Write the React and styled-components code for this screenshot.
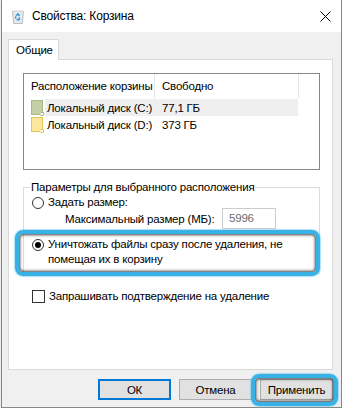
import styled, { createGlobalStyle } from 'styled-components'

const GlobalStyle = createGlobalStyle`
  html, body {
    margin: 0;
    padding: 0;
    background: #fff;
  }
  body {
    font-family: "Liberation Sans", Arial, sans-serif;
    font-size: 11.5px;
    letter-spacing: -0.2px;
    color: #000;
  }
`

const Window = styled.div`
  box-sizing: border-box;
  width: 341px;
  height: 408px;
  margin-left: 1px;
  background: #f0f0f0;
  border: 1px solid #868686;
  border-top: none;
  box-shadow: 0 1px 2px rgba(0, 0, 0, 0.25);
  display: flex;
  flex-direction: column;
  white-space: nowrap;
`

const TitleBar = styled.div`
  height: 32px;
  background: #fff;
  display: flex;
  align-items: center;
  padding: 0 10px 0 9px;
  gap: 7px;
`

const Title = styled.span`
  flex: 1;
  font-size: 12px;
  line-height: 16px;
`

const Body = styled.div`
  padding: 7px 8px 0 6px;
`

const TabStrip = styled.div`
  display: flex;
  position: relative;
  z-index: 1;
  margin-bottom: -1px;
`

const Tab = styled.div`
  box-sizing: border-box;
  width: 51px;
  height: 21px;
  padding: 3px 0 0 7px;
  background: #fff;
  border: 1px solid #d9d9d9;
  border-bottom: none;
  line-height: 15px;
`

const Panel = styled.div`
  box-sizing: border-box;
  height: 311px;
  background: #fff;
  border: 1px solid #d9d9d9;
  padding: 13px 12px 0 14px;
`

const ListBox = styled.div`
  box-sizing: border-box;
  height: 97px;
  border: 1px solid #828790;
`

const HeaderRow = styled.div`
  display: flex;
  height: 24px;
  margin-bottom: 1px;
`

const HeaderCell = styled.div`
  box-sizing: border-box;
  width: ${({ $w }) => $w}px;
  padding-left: 7px;
  display: flex;
  align-items: center;
  border-right: 1px solid #e5e5e5;
`

const Row = styled.div`
  display: flex;
  align-items: center;
  height: 17px;
  padding-left: 7px;
`

const DriveIcon = styled.svg`
  flex: none;
  width: 13px;
  height: 16px;
  margin-right: 1px;
`

const RowCells = styled.div`
  display: flex;
  height: 100%;
  background: ${({ $active }) => ($active ? '#efefef' : 'transparent')};
`

const Cell = styled.div`
  box-sizing: border-box;
  width: ${({ $w }) => $w}px;
  padding-left: ${({ $pad }) => $pad}px;
  display: flex;
  align-items: center;
`

const Group = styled.fieldset`
  margin: 10px 0 0;
  padding: 0 0 6px 8px;
  border: 1px solid #dcdcdc;
  min-width: 0;
`

const Legend = styled.legend`
  margin-left: -2px;
  padding: 0 1px;
  line-height: 15px;
`

const Option = styled.label`
  position: relative;
  display: flex;
  align-items: flex-start;
  gap: 4px;
  line-height: 15px;
  margin-top: ${({ $mt }) => $mt || 0}px;

  ${({ $marked }) =>
    $marked &&
    `
    &::after {
      content: '';
      position: absolute;
      top: -7px;
      left: -17px;
      right: -1px;
      bottom: -9px;
      border: 4px solid #38b2e6;
      border-radius: 8px;
      box-shadow: inset 0 0 3px 1px rgba(0, 0, 0, 0.75), 0 0 1px 1px rgba(120, 205, 240, 0.6);
      pointer-events: none;
    }
  `}
`

const Radio = styled.span`
  flex: none;
  box-sizing: border-box;
  width: 12px;
  height: 12px;
  margin-top: 2px;
  border: 1px solid #333;
  border-radius: 50%;
  background: #fff;
  display: flex;
  align-items: center;
  justify-content: center;

  &::before {
    content: '';
    width: 6px;
    height: 6px;
    border-radius: 50%;
    background: ${({ $checked }) => ($checked ? '#000' : 'transparent')};
  }
`

const SizeRow = styled.div`
  display: flex;
  align-items: center;
  height: 21px;
  margin-top: -2px;
  padding-left: 33px;
`

const SizeLabel = styled.span`
  width: 157px;
`

const SizeInput = styled.div`
  box-sizing: border-box;
  width: 54px;
  height: 21px;
  border: 1px solid #cccccc;
  padding: 2px 0 0 6px;
  color: #6d6d6d;
  line-height: 15px;
`

const CheckRow = styled.label`
  display: flex;
  align-items: center;
  gap: 4px;
  margin: 15px 0 0 9px;
  line-height: 15px;
`

const Checkbox = styled.span`
  box-sizing: border-box;
  width: 13px;
  height: 13px;
  border: 1px solid #333;
  background: #fff;
`

const Footer = styled.div`
  display: flex;
  justify-content: flex-end;
  gap: 8px;
  margin-top: 9px;
`

const Button = styled.div`
  position: relative;
  box-sizing: border-box;
  width: 73px;
  height: 21px;
  background: #e1e1e1;
  border: ${({ $default }) => ($default ? '2px solid #0078d7' : '1px solid #adadad')};
  display: flex;
  align-items: center;
  justify-content: center;

  ${({ $marked }) =>
    $marked &&
    `
    &::after {
      content: '';
      position: absolute;
      top: -6px;
      left: -10px;
      right: -6px;
      bottom: -7px;
      border: 4px solid #38b2e6;
      border-radius: 8px;
      box-shadow: inset 0 0 3px 1px rgba(0, 0, 0, 0.75), 0 0 1px 1px rgba(120, 205, 240, 0.6);
      pointer-events: none;
    }
  `}
`

function BinIcon() {
  return (
    <svg width="14" height="15" viewBox="0 0 14 15">
      <path d="M1.5 2.5 L12.5 2.5 L11.3 14.5 L2.7 14.5 Z" fill="#e6e9ec" stroke="#b8bec4" />
      <path d="M1 1.5 L13 1.5 L13 3 L1 3 Z" fill="#d3d8dc" />
      <path d="M5 6.5 L7 5 L8.5 7 M8.6 8.5 L8 10.8 L5.6 10.6 M4.8 9.6 L4.6 7.4" fill="none" stroke="#2b8fd6" strokeWidth="1.4" />
    </svg>
  )
}

function CloseIcon() {
  return (
    <svg width="11" height="11" viewBox="0 0 11 11">
      <path d="M0.5 0.5 L10.5 10.5 M10.5 0.5 L0.5 10.5" stroke="#000" strokeWidth="1" />
    </svg>
  )
}

function Drive({ fill, stroke }) {
  return (
    <DriveIcon viewBox="0 0 13 16">
      <rect x="0.5" y="0.5" width="11" height="14" fill={fill} stroke={stroke} />
      <path d="M9.5 12.5 L12.5 12.5 L12.5 15.5 L9.5 15.5" fill="#fff" stroke={stroke} />
    </DriveIcon>
  )
}

const drives = [
  { name: 'Локальный диск (C:)', free: '77,1 ГБ', fill: '#c4cfa6', stroke: '#a8b785', active: true },
  { name: 'Локальный диск (D:)', free: '373 ГБ', fill: '#fde79c', stroke: '#e6c558' },
]

export default function App() {
  return (
    <>
      <GlobalStyle />
      <Window>
        <TitleBar>
          <BinIcon />
          <Title>Свойства: Корзина</Title>
          <CloseIcon />
        </TitleBar>
        <Body>
          <TabStrip>
            <Tab>Общие</Tab>
          </TabStrip>
          <Panel>
            <ListBox>
              <HeaderRow>
                <HeaderCell $w={131}>Расположение корзины</HeaderCell>
                <HeaderCell $w={144}>Свободно</HeaderCell>
              </HeaderRow>
              {drives.map((d) => (
                <Row key={d.name}>
                  <Drive fill={d.fill} stroke={d.stroke} />
                  <RowCells $active={d.active}>
                    <Cell $w={110} $pad={2}>{d.name}</Cell>
                    <Cell $w={143} $pad={7}>{d.free}</Cell>
                  </RowCells>
                </Row>
              ))}
            </ListBox>
            <Group>
              <Legend>Параметры для выбранного расположения</Legend>
              <Option>
                <Radio />
                <span>Задать размер:</span>
              </Option>
              <SizeRow>
                <SizeLabel>Максимальный размер (МБ):</SizeLabel>
                <SizeInput>5996</SizeInput>
              </SizeRow>
              <Option $mt={8} $marked>
                <Radio $checked />
                <span>
                  Уничтожать файлы сразу после удаления, не
                  <br />
                  помещая их в корзину
                </span>
              </Option>
            </Group>
            <CheckRow>
              <Checkbox />
              <span>Запрашивать подтверждение на удаление</span>
            </CheckRow>
          </Panel>
          <Footer>
            <Button $default>ОК</Button>
            <Button>Отмена</Button>
            <Button $marked>Применить</Button>
          </Footer>
        </Body>
      </Window>
    </>
  )
}
